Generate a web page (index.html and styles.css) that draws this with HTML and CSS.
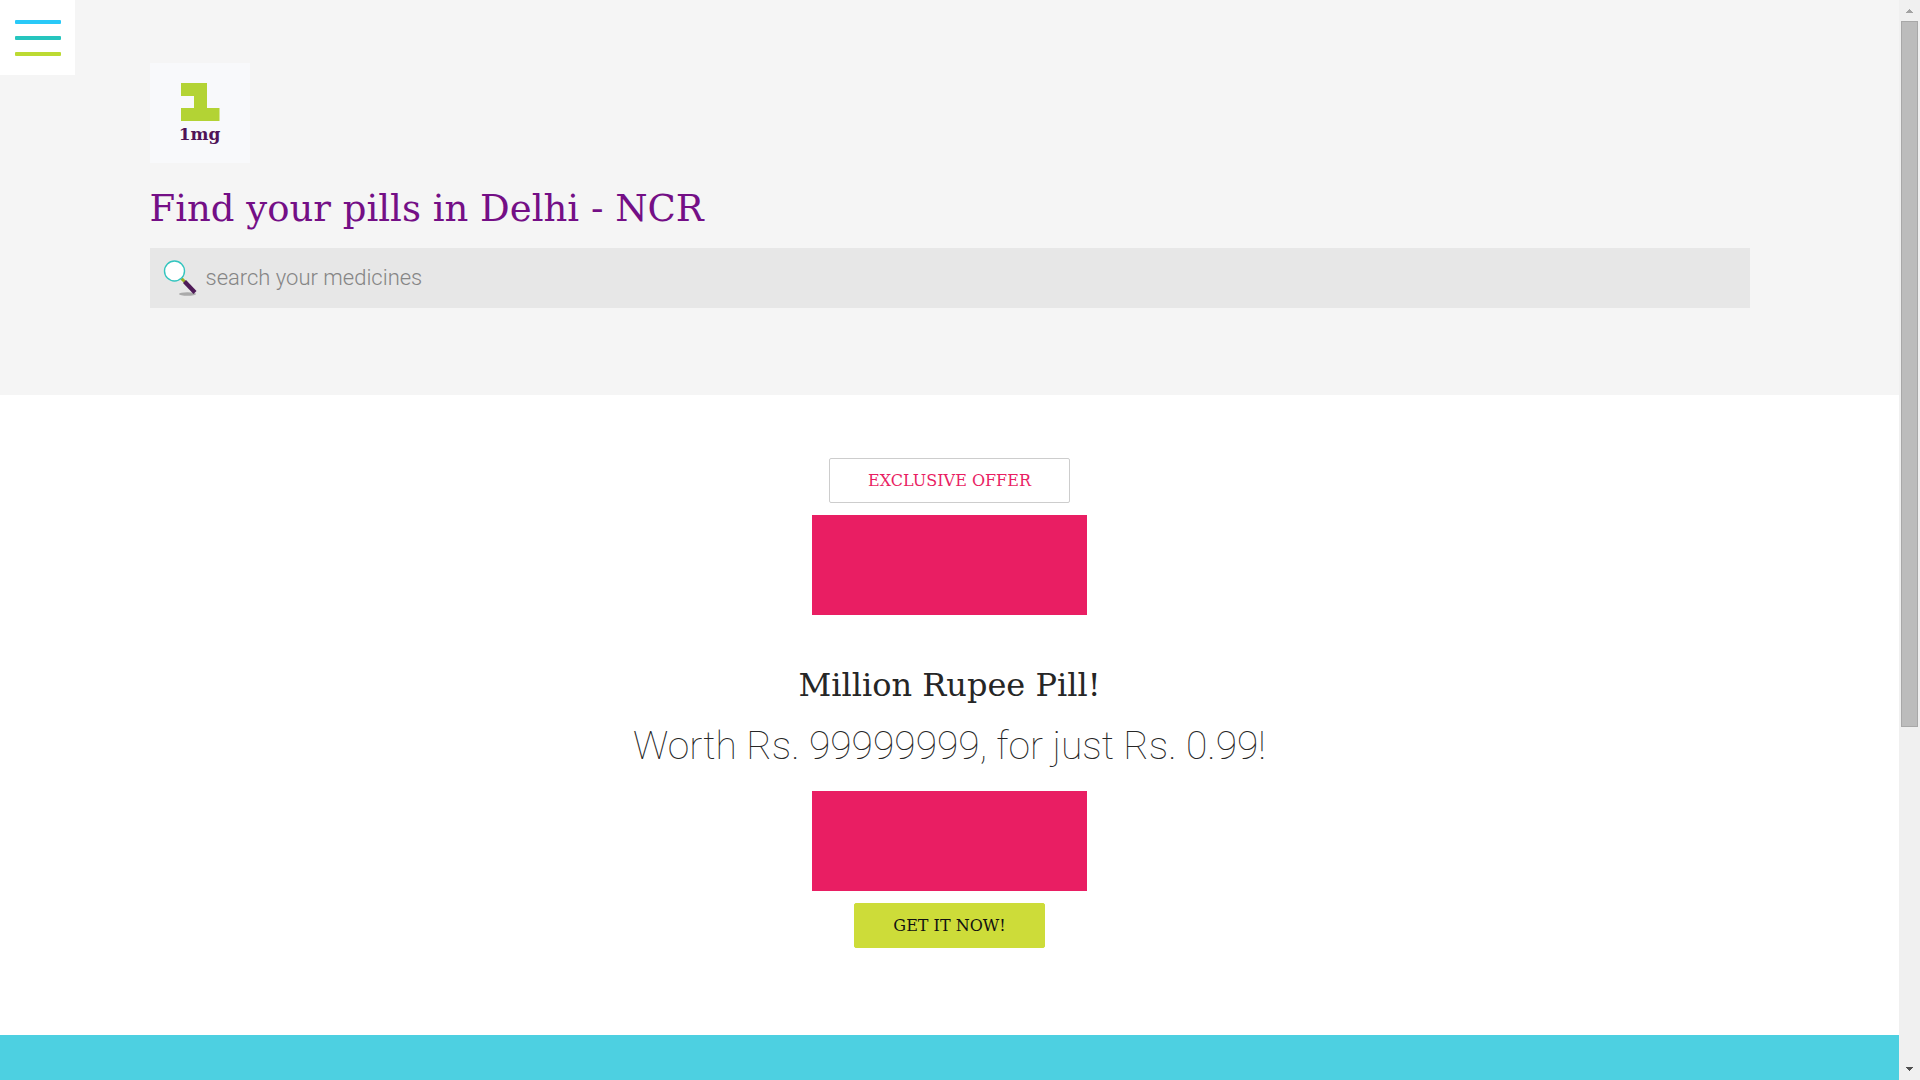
FILE: index.html
```html
<!DOCTYPE html>
<html lang="en">
<head>
<meta charset="utf-8">
<meta name="viewport" content="width=device-width, initial-scale=1">
<title>1mg</title>
<link rel="stylesheet" href="styles.css">
</head>
<body>
<div class="page">
  <header class="hero">
    <div class="container">
      <a class="logo" href="#" aria-label="1mg home">
        <svg class="logo-mark" viewBox="0 0 40 40" aria-hidden="true"><path fill="#b3d334" d="M1 1h26v25h12.500v13H1V26h13V14H1z"/></svg>
        <span class="logo-name">1mg</span>
      </a>
      <h1 class="hero-title"><label for="search">Find your pills in Delhi - NCR</label></h1>
      <form class="search">
        <svg class="search-icon" viewBox="0 0 34 36" aria-hidden="true">
          <ellipse cx="24.500" cy="34" rx="8.500" ry="1.800" fill="#aaa"/>
          <path d="M18.500 18.500l4 4" stroke="#9aae25" stroke-width="3"/>
          <path d="M21.500 21.500l10.500 11" stroke="#4f1b58" stroke-width="4.200"/>
          <circle cx="11.500" cy="11" r="10" fill="#fff" stroke="#33c5bf" stroke-width="1.400"/>
        </svg>
        <input class="search-input" id="search" type="text" placeholder="search your medicines">
      </form>
    </div>
  </header>
  <main class="offer">
    <button class="button button-outline" type="button">EXCLUSIVE OFFER</button>
    <div class="banner"></div>
    <h2 class="offer-title">Million Rupee Pill!</h2>
    <p class="offer-text">Worth Rs. 99999999, for just Rs. 0.99!</p>
    <div class="banner"></div>
    <button class="button button-solid" type="button">GET IT NOW!</button>
  </main>
  <section class="next"></section>
</div>
<div class="scrollbar" aria-hidden="true">
  <svg class="arrow" viewBox="0 0 7 4"><path fill="#a3a3a3" d="M3 0h1v1h1v1h1v1h1v1H0V3h1V2h1V1h1z"/></svg>
  <div class="track"><div class="thumb"></div></div>
  <svg class="arrow" viewBox="0 0 7 4"><path fill="#505050" d="M0 0h7v1H6v1H5v1H4v1H3V3H2V2H1V1H0z"/></svg>
</div>
<button class="menu" type="button" aria-label="Menu">
  <span class="menu-line blue"></span>
  <span class="menu-line teal"></span>
  <span class="menu-line lime"></span>
</button>
</body>
</html>
```
FILE: styles.css
```css
* { box-sizing: border-box; }

body {
  display: flex;
  height: 100vh;
  margin: 0;
  overflow: hidden;
  background: #fff;
  color: #262626;
  font-family: Roboto, sans-serif;
}

.page {
  display: flex;
  flex: 1;
  flex-direction: column;
}

.container {
  max-width: 1600px;
  margin: 0 auto;
}

.hero {
  padding: 63px 24px 87px;
  background: #f5f5f5;
}

.logo {
  display: flex;
  flex-direction: column;
  align-items: center;
  width: 100px;
  height: 100px;
  padding-top: 19px;
  background: #f8f9fb;
  color: #4f1257;
  text-decoration: none;
}

.logo-mark { width: 40px; height: 40px; }

.logo-name {
  font: bold 17px/24px "DejaVu Serif", serif;
}

.hero-title,
.offer-title {
  margin: 0;
  font-family: "DejaVu Serif", serif;
  font-weight: 400;
}

.hero-title {
  padding: 21px 0 14px;
  color: #740f86;
  font-size: 37px;
  line-height: 50px;
}

.search {
  display: flex;
  align-items: center;
  gap: 9px;
  height: 60px;
  padding: 0 13px;
  background: #e7e7e7;
}

.search-icon { width: 34px; height: 36px; }

.search-input {
  flex: 1;
  padding: 0;
  border: 0;
  outline: 0;
  background: none;
  color: #262626;
  font: 300 22px/30px Roboto, sans-serif;
}

.search-input::placeholder { color: #858585; }

.offer {
  display: flex;
  flex-direction: column;
  align-items: center;
  padding: 63px 24px 87px;
}

.button {
  height: 45px;
  padding: 0 38px;
  border: 1px solid #cdcdcd;
  border-radius: 2px;
  font: 16px/20px "DejaVu Serif", serif;
}

.button-outline { background: #fff; color: #e91e63; }
.button-solid { border-color: #cddc39; background: #cddc39; color: #111; }

.banner {
  width: 275px;
  height: 100px;
  margin: 12px 0;
  background: #e91e63;
}

.offer-title {
  padding-top: 33px;
  font-size: 32px;
  line-height: 50px;
}

.offer-text {
  margin: 0;
  padding: 11px 0 8px;
  font-size: 39px;
  font-weight: 100;
  line-height: 50px;
}

.next { flex: 1; background: #4dd0e1; }

.scrollbar {
  display: flex;
  flex-direction: column;
  align-items: center;
  width: 21px;
  padding: 9px 2px;
  background: #f0f0f0;
}

.arrow { width: 7px; height: 4px; }

.track { flex: 1; width: 100%; padding: 8px 0; }

.thumb {
  height: 68%;
  border: 1px solid #a8a8a8;
  background: #bcbcbc;
}

.menu {
  position: absolute;
  top: 0;
  left: 0;
  display: flex;
  flex-direction: column;
  gap: 12px;
  width: 75px;
  height: 75px;
  padding: 20px 14px 19px 15px;
  border: 0;
  background: #fff;
}

.menu-line { height: 4px; width: 100%; border-radius: 1px; }
.blue { background: #29c9f8; }
.teal { background: #26c5be; }
.lime { background: #bcda32; }
```
